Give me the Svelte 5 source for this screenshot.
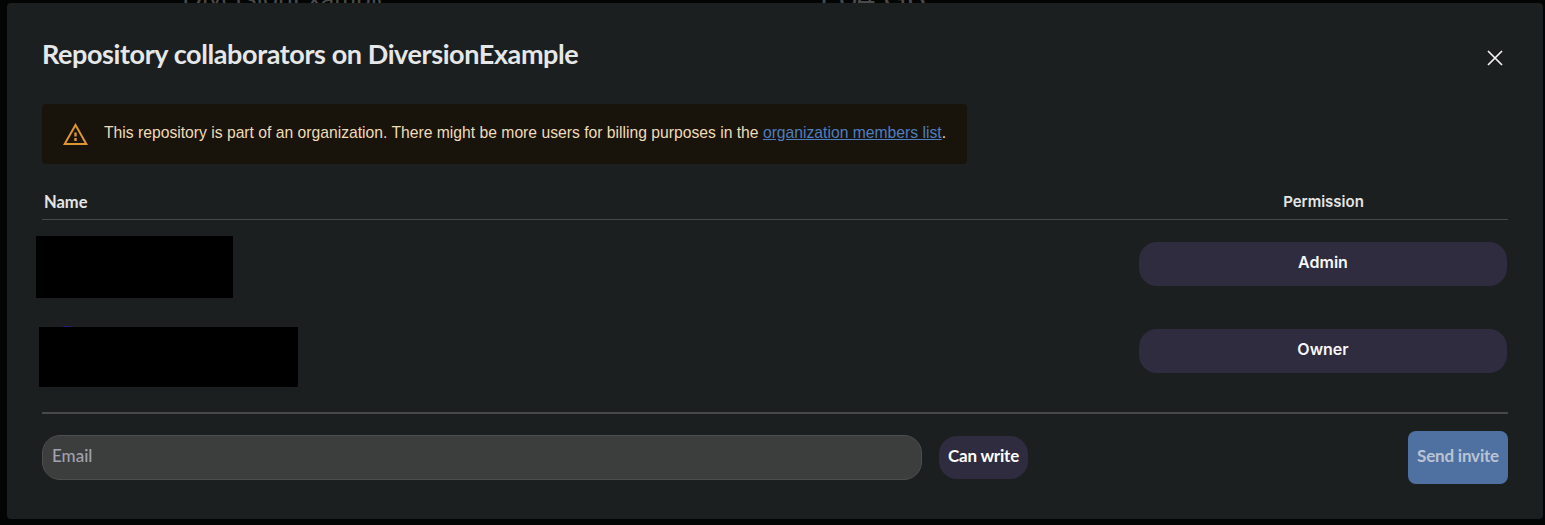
<script lang="ts">
    type Member = { role: string; blockWidth: number; blockHeight: number; blockTop: number; blockLeft: number; avatar?: boolean };

    const members: Member[] = [
        { role: 'Admin', blockWidth: 197, blockHeight: 62, blockTop: 16, blockLeft: -6 },
        { role: 'Owner', blockWidth: 259, blockHeight: 60, blockTop: 20, blockLeft: -3, avatar: true }
    ];
</script>

<div class="page">
    <div class="behind">
        <span class="behind-name">DiversionExample</span>
        <span class="behind-size">1.04 GB</span>
    </div>

    <div class="modal">
        <header class="head">
            <h2>Repository collaborators on DiversionExample</h2>
            <button class="close" type="button" aria-label="Close">
                <svg viewBox="0 0 16 16" width="16" height="16" fill="none" stroke="currentColor" stroke-width="1.7">
                    <path d="M1 1l14 14M15 1L1 15" />
                </svg>
            </button>
        </header>

        <div class="alert">
            <svg class="warn" viewBox="0 0 25 22" width="25" height="22" fill="none" stroke="#dd9632" stroke-width="2">
                <path d="M12.5 2L1.7 21h21.6z" />
                <path d="M12.5 9.5v4M12.5 15v3" stroke-width="2.4" />
            </svg>
            <p>
                This repository is part of an organization. There might be more users for billing purposes in the
                <a href="#members">organization members list</a>.
            </p>
        </div>

        <div class="table-head">
            <span class="col-name">Name</span>
            <span class="col-perm">Permission</span>
        </div>

        {#each members as m}
            <div class="row">
                <div class="who">
                    {#if m.avatar}
                        <div class="avatar"></div>
                    {/if}
                    <div
                        class="redacted"
                        style="width:{m.blockWidth}px;height:{m.blockHeight}px;margin-top:{m.blockTop}px;margin-left:{m.blockLeft}px"
                    ></div>
                </div>
                <button class="role" type="button">{m.role}</button>
            </div>
        {/each}

        <div class="invite">
            <input class="email" type="text" placeholder="Email" />
            <button class="can-write" type="button">Can write</button>
            <button class="send" type="button">Send invite</button>
        </div>
    </div>
</div>

<style>
    :global(body) {
        margin: 0;
        background: #030404;
        overflow: hidden;
    }

    .page {
        position: relative;
        height: 525px;
        padding: 3px 2px 6px 7px;
        box-sizing: border-box;
        font-family: Lato, sans-serif;
    }

    .behind {
        position: absolute;
        top: -17px;
        left: 182px;
        display: flex;
        gap: 423px;
        font-size: 26.5px;
        line-height: 28px;
        color: #4a4a4a;
    }

    .behind-size {
        font-size: 31px;
    }

    .modal {
        position: relative;
        height: 516px;
        box-sizing: border-box;
        padding: 0 35px;
        background: #1b1f20;
        border-radius: 4px;
    }

    .head {
        display: flex;
        justify-content: space-between;
        align-items: center;
        height: 101px;
        box-sizing: border-box;
    }

    h2 {
        margin: 0;
        font-size: 27px;
        font-weight: 700;
        letter-spacing: -0.4px;
        color: #e6e7e8;
    }

    .close {
        display: flex;
        margin-right: 5px;
        margin-top: 9px;
        padding: 0;
        border: 0;
        background: none;
        color: #f2f2f2;
    }

    .alert {
        display: flex;
        align-items: center;
        gap: 16px;
        width: 925px;
        height: 60px;
        box-sizing: border-box;
        padding: 0 21px;
        background: #18130b;
        border-radius: 4px;
    }

    .warn {
        flex: none;
        margin-bottom: 1px;
    }

    .alert p {
        margin: 0 0 3px;
        font-family: 'Liberation Sans', Arial, sans-serif;
        font-size: 15.7px;
        white-space: nowrap;
        color: #f0dcb6;
    }

    .alert a {
        color: #4f7fc0;
    }

    .table-head {
        display: grid;
        grid-template-columns: 1fr 369px;
        align-items: center;
        height: 56px;
        padding-top: 20px;
        box-sizing: border-box;
        border-bottom: 1px solid #46494a;
        font-size: 16.5px;
        font-weight: 700;
        color: #e4e5e5;
    }

    .col-name {
        padding-left: 2px;
    }

    .col-perm {
        text-align: center;
        font-family: Inter, sans-serif;
        font-weight: 600;
        font-size: 15px;
    }

    .row {
        display: grid;
        grid-template-columns: 1fr 369px;
        height: 87px;
    }

    .who {
        position: relative;
    }

    .avatar {
        position: absolute;
        top: 19px;
        left: 10px;
        width: 30px;
        height: 30px;
        border-radius: 50%;
        background: #1d1f8a;
    }

    .redacted {
        position: relative;
        background: #000;
    }

    .role {
        height: 44px;
        margin-top: 22px;
        margin-right: 1px;
        padding: 0 0 5px;
        border: 0;
        border-radius: 18px;
        background: #2e2c3e;
        color: #f6f6f8;
        font-family: Inter, sans-serif;
        font-size: 16px;
        font-weight: 600;
    }

    .invite {
        display: flex;
        align-items: center;
        margin-top: 18px;
        height: 89px;
        border-top: 2px solid #46484a;
        box-sizing: border-box;
    }

    .email {
        width: 880px;
        height: 45px;
        box-sizing: border-box;
        padding: 0 9px 5px;
        background: #3c3e3e;
        border: 1px solid #4d4f4f;
        border-radius: 18px;
        font-family: Lato, sans-serif;
        font-size: 17px;
        font-weight: 500;
        outline: none;
    }

    .email::placeholder {
        color: #a0a3b0;
        opacity: 1;
    }

    .can-write {
        width: 89px;
        height: 43px;
        margin-left: 17px;
        padding: 0 0 5px;
        border: 0;
        border-radius: 18px;
        background: #2e2c3e;
        color: #fff;
        font-family: Lato, sans-serif;
        font-size: 17px;
        font-weight: 700;
        letter-spacing: -0.2px;
    }

    .send {
        width: 100px;
        height: 53px;
        margin-left: auto;
        padding: 0 0 5px;
        border: 0;
        border-radius: 8px;
        background: #4f71a1;
        color: #b9c3d2;
        font-family: Lato, sans-serif;
        font-size: 17px;
        font-weight: 700;
        letter-spacing: -0.2px;
    }
</style>
